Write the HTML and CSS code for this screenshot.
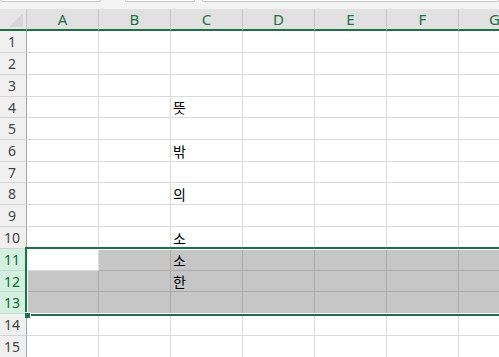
FILE: index.html
```html
<!DOCTYPE html>
<html lang="ko">
<head>
    <meta charset="UTF-8">
    <title>Sheet1</title>
    <link rel="stylesheet" href="styles.css">
</head>
<body>

<div class="toolbar">
    <div class="box box-name"></div>
    <div class="box box-fx"></div>
    <div class="box box-formula"></div>
</div>

<div class="sheet-wrap">
    <div class="sheet" id="sheet">
        <div class="corner"><span class="corner-tri"></span></div>
    </div>
    <div class="selection"><span class="fill-handle"></span></div>
</div>

<script>
    const columns = ['A', 'B', 'C', 'D', 'E', 'F', 'G'];
    const values = { 4: '뜻', 6: '밖', 8: '의', 10: '소', 11: '소', 12: '한' };
    const selectedRows = [11, 12, 13];

    const sheet = document.getElementById('sheet');

    columns.forEach(col => {
        const head = document.createElement('div');
        head.className = 'col-head';
        head.textContent = col;
        sheet.appendChild(head);
    });

    for (let row = 1; row <= 15; row++) {
        const selected = selectedRows.includes(row);
        const head = document.createElement('div');
        head.className = selected ? 'row-head selected' : 'row-head';
        head.textContent = row;
        sheet.appendChild(head);

        columns.forEach(col => {
            const cell = document.createElement('div');
            cell.className = 'cell';
            if (selected && !(row === 11 && col === 'A')) cell.classList.add('picked');
            if (col === 'C' && values[row]) cell.textContent = values[row];
            sheet.appendChild(cell);
        });
    }
</script>

</body>
</html>
```

FILE: styles.css
```css
body {
    margin: 0;
    width: 499px;
    height: 357px;
    overflow: hidden;
    background: #fff;
    font-family: 'Noto Sans', 'Noto Sans CJK KR', sans-serif;
}
.toolbar {
    display: flex;
    height: 9px;
    background: #f3f3f3;
    overflow: hidden;
}
.box {
    height: 1px;
    background: #fff;
    border: 1px solid #c8c8c8;
    border-top: none;
    border-radius: 0 0 3px 3px;
}
.box-name {
    width: 99px;
}
.box-fx {
    width: 68px;
    margin-left: 24px;
}
.box-formula {
    flex: 1;
    margin-left: 7px;
}
.sheet-wrap {
    position: relative;
    width: 499px;
    height: 348px;
    overflow: hidden;
}
.sheet {
    display: grid;
    grid-template-columns: 27px repeat(7, 72px);
    grid-template-rows: 22px 22px 22px 22px 21px 22px 22px 21px 22px 22px 22px 22px 21px 22px 22px 22px;
}
.corner {
    position: relative;
    background: #e6e6e6;
    border-right: 1px solid #c6c6c6;
    border-bottom: 2px solid #1e7145;
}
.corner-tri {
    position: absolute;
    right: 3px;
    bottom: 2px;
    width: 0;
    height: 0;
    border-left: 14px solid transparent;
    border-bottom: 14px solid #d6d6d6;
}
.col-head {
    display: flex;
    align-items: center;
    justify-content: center;
    background: #e1e1e1;
    border-right: 1px solid #c6c6c6;
    border-bottom: 2px solid #1e7145;
    color: #1e7145;
    font-size: 15px;
    padding-bottom: 1px;
}
.row-head {
    display: flex;
    align-items: center;
    justify-content: center;
    background: #f0f0f0;
    border-right: 1px solid #a6a6a6;
    border-bottom: 1px solid #d4d4d4;
    color: #444;
    font-size: 14px;
    padding-right: 2px;
}
.row-head.selected {
    background: #d3f0e0;
    color: #0e6b38;
    border-bottom-color: #c2dccd;
}
.cell {
    display: flex;
    align-items: flex-end;
    padding: 0 0 1px 2px;
    border-right: 1px solid #dadada;
    border-bottom: 1px solid #dadada;
    font-family: 'Noto Sans CJK KR', sans-serif;
    font-size: 14px;
    line-height: 18px;
    color: #000;
}
.cell.picked {
    background: #c6c6c6;
    border-right-color: #ababab;
    border-bottom-color: #ababab;
}
.selection {
    position: absolute;
    left: 25px;
    right: -4px;
    top: 238px;
    height: 65px;
    border: 2px solid #1e7145;
    box-shadow: inset 1px 1px 0 #fff, inset -1px -1px 0 #fff;
}
.fill-handle {
    position: absolute;
    left: -2px;
    bottom: -4px;
    width: 5px;
    height: 5px;
    background: #1e7145;
    border: 1px solid #fff;
    border-left: none;
    border-bottom: none;
}
```
